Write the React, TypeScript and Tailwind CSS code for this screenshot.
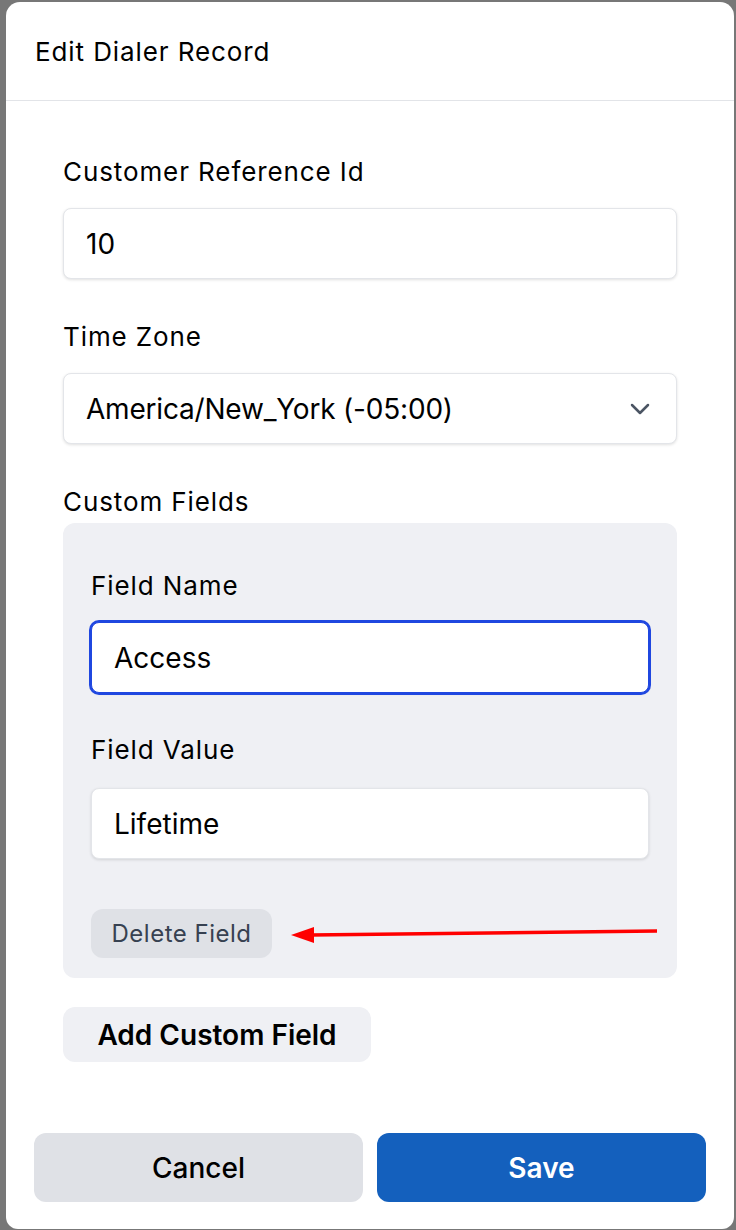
import React from 'react';

const font = { fontFamily: 'Inter, "Noto Sans", sans-serif' };

function Label({ children }: { children: React.ReactNode }) {
  return <div className="h-8 text-[26px] leading-8 tracking-[0.9px] text-black">{children}</div>;
}

function TextInput({ value, focused }: { value: string; focused?: boolean }) {
  return (
    <div
      className={`flex h-[71px] items-center rounded-lg bg-white px-[22px] text-[28px] text-black shadow-[0_1px_3px_rgba(0,0,0,0.12)] ${
        focused ? 'border border-[#1f47e0] ring-2 ring-[#1f47e0]' : 'border border-[#e3e5e9]'
      }`}
    >
      {value}
    </div>
  );
}

export default function App() {
  return (
    <div className="min-h-screen bg-[#777777] pl-[6px] pr-[2px] pt-[2px]" style={font}>
      <div className="flex flex-col rounded-t-[14px] rounded-b-[12px] bg-white">
        {/* Header */}
        <div className="flex h-[99px] items-center border-b border-[#e2e4e8] px-[29px]">
          <h2 className="text-[26px] font-normal tracking-[0.9px] text-black">Edit Dialer Record</h2>
        </div>

        {/* Body */}
        <div className="flex flex-col px-[57px] pt-[55px]">
          <Label>Customer Reference Id</Label>
          <div className="mt-5">
            <TextInput value="10" />
          </div>

          <div className="mt-[42px]">
            <Label>Time Zone</Label>
          </div>
          <div className="mt-5 flex h-[71px] items-center justify-between rounded-lg border border-[#e3e5e9] bg-white pl-[22px] pr-[26px] text-[28px] tracking-[-0.2px] text-black shadow-[0_1px_3px_rgba(0,0,0,0.12)]">
            <span>America/New_York (-05:00)</span>
            <svg width="20" height="12" viewBox="0 0 20 12" fill="none">
              <path d="M2 2l8 8 8-8" stroke="#4b5563" strokeWidth="2.5" strokeLinecap="round" strokeLinejoin="round" />
            </svg>
          </div>

          <div className="mt-[42px]">
            <Label>Custom Fields</Label>
          </div>
          <div className="mt-[5px] rounded-[12px] bg-[#eff0f4] px-[28px] pb-5 pt-[47px]">
            <Label>Field Name</Label>
            <div className="mt-5">
              <TextInput value="Access" focused />
            </div>
            <div className="mt-[41px]">
              <Label>Field Value</Label>
            </div>
            <div className="mt-[22px]">
              <TextInput value="Lifetime" />
            </div>
            <div className="mt-[50px] flex items-center gap-[19px]">
              <button className="h-[49px] w-[181px] shrink-0 rounded-[12px] bg-[#dfe1e6] text-[24px] tracking-[0.5px] text-[#374151]">
                Delete Field
              </button>
              {/* annotation arrow */}
              <svg className="shrink-0" width="366" height="22" viewBox="0 0 366 22" fill="none">
                <path d="M20 12L366 8" stroke="#ff0000" strokeWidth="3.5" />
                <polygon points="0,12 23,4 23,20" fill="#ff0000" />
              </svg>
            </div>
          </div>

          <button className="mt-[29px] h-[55px] w-[308px] rounded-[12px] bg-[#eff0f4] text-[28px] font-semibold text-black">
            Add Custom Field
          </button>
        </div>

        {/* Footer */}
        <div className="mt-[71px] flex gap-[14px] px-[28px] pb-[27px]">
          <button className="h-[69px] flex-1 rounded-[12px] bg-[#dfe1e6] text-[28px] font-medium text-black">
            Cancel
          </button>
          <button className="h-[69px] flex-1 rounded-[12px] bg-[#1460bd] text-[28px] font-semibold text-white">
            Save
          </button>
        </div>
      </div>
    </div>
  );
}
